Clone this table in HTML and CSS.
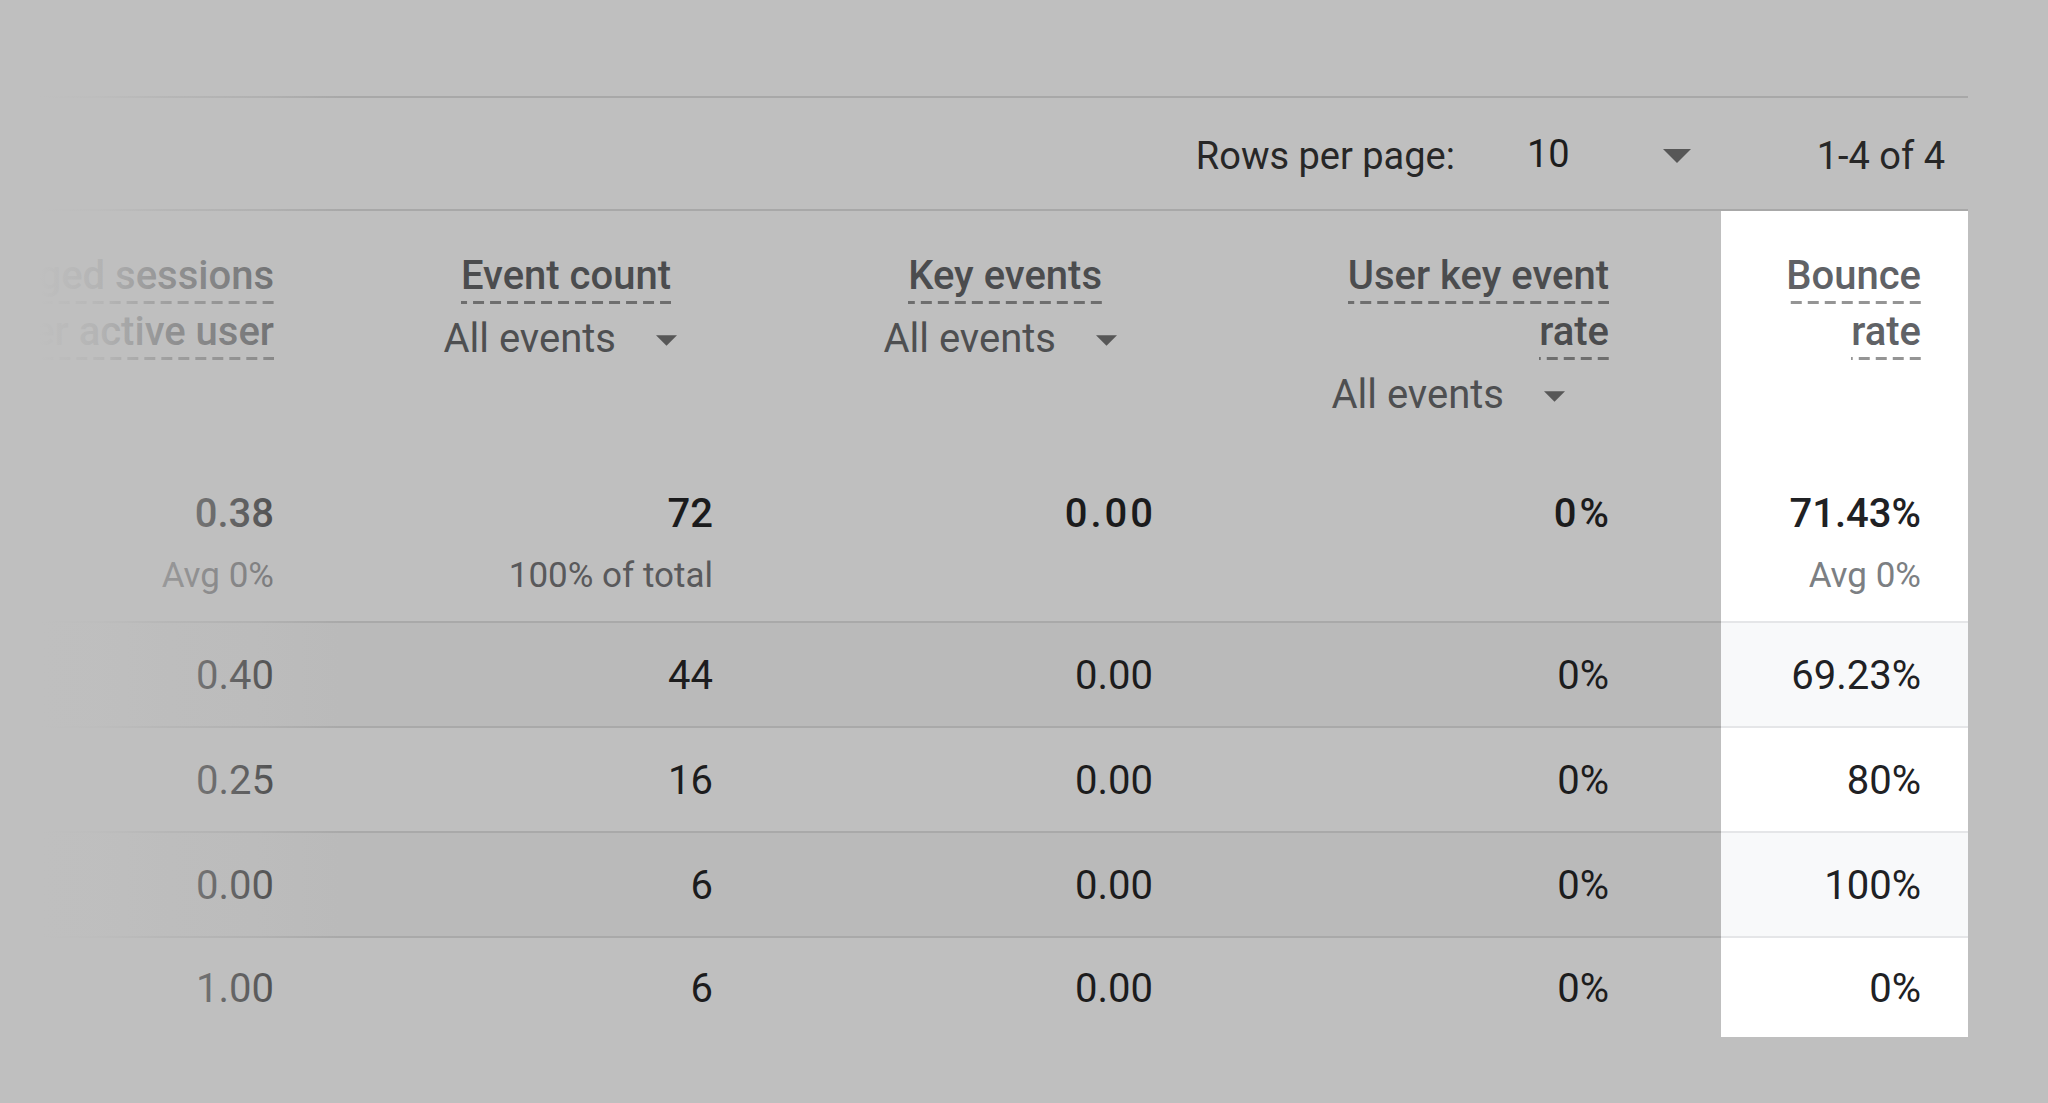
FILE: index.html
```html
<!DOCTYPE html>
<html lang="en">
<head>
<meta charset="utf-8">
<title>Table</title>
<link rel="stylesheet" href="styles.css">
</head>
<body>
<div class="page">
  <div class="pager">
    <span class="pager-label">Rows per page:</span>
    <span class="pager-select">
      <span class="pager-value">10</span>
      <svg class="caret caret-lg" viewBox="0 0 10 5"><path d="M0 0L5 5L10 0Z"/></svg>
    </span>
    <span class="pager-range">1-4 of 4</span>
  </div>

  <div class="table">
    <div class="row head">
      <div class="cell">
        <div class="hline"><span class="dash">Engaged sessions</span></div>
        <div class="hline"><span class="dash">per active user</span></div>
      </div>
      <div class="cell">
        <div class="hline sort-a"><span class="dash">Event count</span></div>
        <div class="hline"><span class="drop">All events<svg class="caret" viewBox="0 0 10 5"><path d="M0 0L5 5L10 0Z"/></svg></span></div>
      </div>
      <div class="cell">
        <div class="hline sort-b"><span class="dash">Key events</span></div>
        <div class="hline"><span class="drop">All events<svg class="caret" viewBox="0 0 10 5"><path d="M0 0L5 5L10 0Z"/></svg></span></div>
      </div>
      <div class="cell c4">
        <div class="hline"><span class="dash">User key event</span></div>
        <div class="hline"><span class="dash">rate</span></div>
        <div class="hline"><span class="drop drop-wide">All events<svg class="caret" viewBox="0 0 10 5"><path d="M0 0L5 5L10 0Z"/></svg></span></div>
      </div>
      <div class="cell hl">
        <div class="hline"><span class="dash">Bounce</span></div>
        <div class="hline"><span class="dash">rate</span></div>
      </div>
    </div>

    <div class="row totals">
      <div class="cell"><div class="tval">0.38</div><div class="tsub">Avg 0%</div></div>
      <div class="cell"><div class="tval">72</div><div class="tsub">100% of total</div></div>
      <div class="cell"><div class="tval wide">0.00</div></div>
      <div class="cell c4"><div class="tval wide">0%</div></div>
      <div class="cell hl"><div class="tval">71.43%</div><div class="tsub">Avg 0%</div></div>
    </div>

    <div class="row data stripe">
      <div class="cell">0.40</div>
      <div class="cell">44</div>
      <div class="cell">0.00</div>
      <div class="cell c4">0%</div>
      <div class="cell hl">69.23%</div>
    </div>
    <div class="row data">
      <div class="cell">0.25</div>
      <div class="cell">16</div>
      <div class="cell">0.00</div>
      <div class="cell c4">0%</div>
      <div class="cell hl">80%</div>
    </div>
    <div class="row data stripe">
      <div class="cell">0.00</div>
      <div class="cell">6</div>
      <div class="cell">0.00</div>
      <div class="cell c4">0%</div>
      <div class="cell hl">100%</div>
    </div>
    <div class="row data last">
      <div class="cell">1.00</div>
      <div class="cell">6</div>
      <div class="cell">0.00</div>
      <div class="cell c4">0%</div>
      <div class="cell hl">0%</div>
    </div>
  </div>

  <div class="fade"></div>
</div>
</body>
</html>
```

FILE: styles.css
```css
* { box-sizing: border-box; }

html, body {
  margin: 0;
  padding: 0;
}

body {
  background: #bfbfbf;
  font-family: Roboto, "Liberation Sans", sans-serif;
  width: 2048px;
  height: 1103px;
  overflow: hidden;
}

.page {
  position: relative;
  width: 1968px;
  padding-top: 96px;
}

/* pagination bar */
.pager {
  display: flex;
  justify-content: flex-end;
  align-items: center;
  height: 115px;
  border-top: 2px solid #a8a8a8;
  border-bottom: 2px solid #a8a8a8;
  padding: 4px 23px 0 0;
  font-size: 38px;
  color: #272727;
}

.pager-select {
  display: flex;
  align-items: center;
  margin-left: 72px;
}

.pager-value {
  color: #1d1d1d;
  margin-top: -4px;
}

.caret {
  display: block;
  fill: #575757;
}

.caret-lg {
  width: 28px;
  height: 14px;
  margin-left: 93px;
}

.pager-range {
  margin-left: 126px;
}

/* table */
.row {
  display: grid;
  grid-template-columns: 321px 439px 440px 521px 247px;
}

.cell {
  padding-right: 47px;
  text-align: right;
  white-space: nowrap;
}

.cell.c4 {
  padding-right: 112px;
}

.cell.hl {
  background: #ffffff;
}

.head .cell {
  height: 229px;
  padding-top: 37px;
}

.hline {
  display: flex;
  justify-content: flex-end;
  white-space: nowrap;
}

.hline.sort-a {
  padding-right: 42px;
}

.hline.sort-b {
  padding-right: 51px;
}

.dash {
  display: block;
  font-size: 40px;
  font-weight: 500;
  line-height: 56px;
  color: #4b4c4e;
  background: linear-gradient(to right, transparent 6px, #6e6e6e 6px) right bottom / 17px 3px repeat-x;
}

.hl .dash {
  color: #606266;
  background-image: linear-gradient(to right, transparent 6px, #959595 6px);
}

.drop {
  display: flex;
  align-items: center;
  margin-top: 7px;
  font-size: 40px;
  line-height: 56px;
  color: #4e4f51;
  padding-right: 36px;
}

.drop-wide {
  padding-right: 44px;
}

.drop .caret {
  width: 21px;
  height: 11px;
  margin-left: 40px;
  margin-top: 2px;
}

/* totals */
.totals .cell {
  height: 183px;
  padding-top: 46px;
  border-bottom: 2px solid #a9a9a9;
}

.totals .cell.hl {
  border-bottom-color: #e5e6e8;
}

.tval {
  font-size: 40px;
  font-weight: 500;
  line-height: 56px;
  color: #1b1b1c;
}

.tval.wide {
  letter-spacing: 3px;
  margin-right: -3px;
}

.hl .tval {
  color: #202124;
}

.tsub {
  font-size: 35px;
  line-height: 44px;
  margin-top: 12px;
  color: #59595b;
}

.hl .tsub {
  color: #7c7f83;
}

/* data rows */
.data .cell {
  height: 105px;
  line-height: 105px;
  font-size: 40px;
  color: #1c1c1d;
  border-bottom: 2px solid #a9a9a9;
}

.data .cell.hl {
  color: #202124;
  border-bottom-color: #e5e6e8;
}

.data.stripe .cell {
  background: #bababa;
}

.data.stripe .cell.hl {
  background: #f8f9fa;
}

.data.last .cell {
  height: 99px;
  line-height: 101px;
  border-bottom: 0;
}

/* left edge fade */
.fade {
  position: absolute;
  left: 0;
  top: 0;
  bottom: 0;
  width: 340px;
  pointer-events: none;
  background: linear-gradient(to right,
    rgba(191,191,191,1) 0px,
    rgba(191,191,191,1) 40px,
    rgba(191,191,191,0.9) 100px,
    rgba(191,191,191,0.6) 170px,
    rgba(191,191,191,0.38) 260px,
    rgba(191,191,191,0) 340px);
}
```
